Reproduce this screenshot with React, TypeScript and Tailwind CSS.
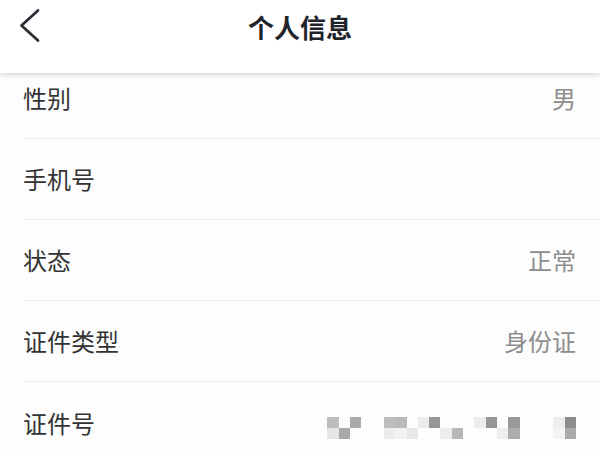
const rows = [
    { label: "性别", value: "男" },
    { label: "手机号", value: "" },
    { label: "状态", value: "正常" },
    { label: "证件类型", value: "身份证" },
];

// pixelated (masked) id number, 22 columns x 2 rows
const mosaic = [
    ["#bdbdbd", "", "#ababab", "", "", "#bdbdbd", "#bababa", "", "#ececec", "#979797", "", "", "", "#ececec", "#979797", "", "#999999", "", "", "", "#ededed", "#8c8c8c"],
    ["#e6e6e6", "#a9a9a9", "", "", "", "#ececec", "#f2f2f2", "#e8e8e8", "", "", "#ededed", "#b8b8b8", "", "", "", "#eeeeee", "#acacac", "", "", "", "#f4f4f4", "#ababab"],
];

export default function App() {
    return (
        <div className="w-[600px] h-[456px] overflow-hidden bg-[#fdfdfd] font-['Noto_Sans_CJK_SC',sans-serif]">
            <div className="relative z-10 h-[73px] bg-white shadow-[0_2px_5px_rgba(0,0,0,0.16)] flex items-start">
                <div className="w-[60px] pt-[8px] pl-[18px]">
                    <svg width="24" height="36" viewBox="0 0 24 36" fill="none">
                        <polyline
                            points="20,2.5 3.5,17.5 20,32.5"
                            stroke="#2a2f36"
                            strokeWidth="2.8"
                            strokeLinecap="round"
                            strokeLinejoin="round"
                        />
                    </svg>
                </div>
                <h1 className="flex-1 text-center pr-[60px] pt-[7px] text-[26px] leading-[40px] font-bold text-[#1f242b]">
                    个人信息
                </h1>
            </div>

            <div className="-mt-[15px]">
                {rows.map((r) => (
                    <div
                        key={r.label}
                        className="ml-[23px] h-[81px] border-b border-[#ececec] flex items-center justify-between pr-[24px]"
                    >
                        <span className="text-[24px] text-[#333333]">{r.label}</span>
                        <span className="text-[24px] text-[#8d8d8d]">{r.value}</span>
                    </div>
                ))}
                <div className="ml-[23px] h-[81px] flex items-center justify-between pr-[24px]">
                    <span className="text-[24px] text-[#333333]">证件号</span>
                    <div className="flex flex-col mt-[11px]">
                        {mosaic.map((line, i) => (
                            <div key={i} className="flex">
                                {line.map((c, j) => (
                                    <div
                                        key={j}
                                        className="w-[11.3px] h-[11px]"
                                        style={{ backgroundColor: c || "transparent" }}
                                    />
                                ))}
                            </div>
                        ))}
                    </div>
                </div>
            </div>
        </div>
    );
}
